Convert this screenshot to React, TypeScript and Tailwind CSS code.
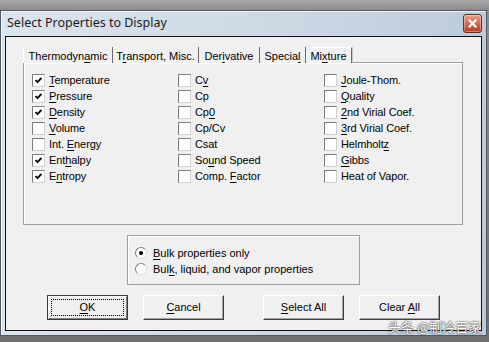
import React from "react";

const FONT = "font-['Liberation_Sans',Arial,sans-serif]";

// label with an underlined access key
function Key({ text, u }: { text: string; u?: number }) {
  if (u === undefined) return <span>{text}</span>;
  return (
    <span>
      {text.slice(0, u)}
      <span className="underline underline-offset-[2px] decoration-[1px]">{text[u]}</span>
      {text.slice(u + 1)}
    </span>
  );
}

function Check({ label, u, checked }: { label: string; u?: number; checked?: boolean }) {
  return (
    <div className="h-[16px] flex items-center gap-[4px]">
      <div className="w-[13px] h-[13px] shrink-0 bg-white border border-t-[#7d7d7d] border-l-[#7d7d7d] border-b-[#d0d0d0] border-r-[#d0d0d0] flex items-center justify-center">
        {checked && (
          <svg width="9" height="9" viewBox="0 0 9 9">
            <polyline points="1.5,4 3.5,6.2 7.5,1.8" fill="none" stroke="#000" strokeWidth="1.8" />
          </svg>
        )}
      </div>
      <span className="text-[11px] leading-none text-black tracking-[-0.1px]">
        <Key text={label} u={u} />
      </span>
    </div>
  );
}

function Radio({ label, u, on }: { label: string; u?: number; on?: boolean }) {
  return (
    <div className="h-[16px] flex items-center gap-[6px]">
      <div className="w-[12px] h-[12px] rounded-full bg-white border border-t-[#808080] border-l-[#808080] border-b-[#e0e0e0] border-r-[#e0e0e0] flex items-center justify-center">
        {on && <div className="w-[4px] h-[4px] rounded-full bg-black" />}
      </div>
      <span className="text-[11px] leading-none text-black">
        <Key text={label} u={u} />
      </span>
    </div>
  );
}

function Btn({ label, u, def, className }: { label: string; u: number; def?: boolean; className?: string }) {
  if (def) {
    return (
      <div className={`w-[81px] h-[25px] border border-[#3a3a3a] ${className ?? ""}`}>
        <div className="w-full h-full border border-t-white border-l-white border-b-[#808080] border-r-[#808080] bg-[#f0f0f0] p-[2px]">
          <div className="w-full h-full border border-dotted border-black flex items-center justify-center text-[11px] text-black">
            <Key text={label} u={u} />
          </div>
        </div>
      </div>
    );
  }
  return (
    <div
      className={`w-[81px] h-[25px] border border-t-white border-l-white border-b-[#404040] border-r-[#404040] bg-[#f0f0f0] shadow-[inset_-1px_-1px_0_#a0a0a0] flex items-center justify-center text-[11px] text-black ${className ?? ""}`}
    >
      <Key text={label} u={u} />
    </div>
  );
}

const tabs: { t: string; u: number; w: string }[] = [
  { t: "Thermodynamic", u: 9, w: "w-[90px]" },
  { t: "Transport, Misc.", u: 1, w: "w-[86px]" },
  { t: "Derivative", u: 3, w: "w-[61px]" },
  { t: "Special", u: 6, w: "w-[46px]" },
  { t: "Mixture", u: 2, w: "w-[46px]" },
];

const col1 = [
  { l: "Temperature", u: 0, c: true },
  { l: "Pressure", u: 0, c: true },
  { l: "Density", u: 0, c: true },
  { l: "Volume", u: 0 },
  { l: "Int. Energy", u: 5 },
  { l: "Enthalpy", u: 3, c: true },
  { l: "Entropy", u: 1, c: true },
];
const col2 = [
  { l: "Cv", u: 1 },
  { l: "Cp" },
  { l: "Cp0", u: 2 },
  { l: "Cp/Cv" },
  { l: "Csat" },
  { l: "Sound Speed", u: 2 },
  { l: "Comp. Factor", u: 6 },
];
const col3 = [
  { l: "Joule-Thom.", u: 0 },
  { l: "Quality", u: 0 },
  { l: "2nd Virial Coef.", u: 0 },
  { l: "3rd Virial Coef.", u: 0 },
  { l: "Helmholtz", u: 8 },
  { l: "Gibbs", u: 0 },
  { l: "Heat of Vapor." },
];

export default function App() {
  return (
    <div className={`relative w-[489px] h-[342px] overflow-hidden bg-gradient-to-b from-[#8e8e8e] to-[#6f6f6f] ${FONT}`}>
      <div className="h-[10px] bg-gradient-to-b from-[#a8a8a8] to-[#8c8c8c]" />

      {/* window */}
      <div className="w-[487px] h-[326px] border border-[#4f5a66] bg-gradient-to-r from-[#dce4ec] via-[#cfdae5] to-[#bccbdb] flex flex-col shadow-[inset_1px_1px_0_#f2f6fa]">
        {/* title bar */}
        <div className="h-[25px] flex items-start justify-between pl-[6px] pr-[4px]">
          <div className="pt-[4px] text-[12.5px] leading-[16px] text-[#1c1c1c] font-['Noto_Sans',sans-serif]">
            Select Properties to Display
          </div>
          <div className="mt-[3px] w-[19px] h-[19px] rounded-[3px] border border-[#6e2a1c] bg-gradient-to-b from-[#e9a590] via-[#d46a4e] to-[#b8381e] shadow-[inset_0_0_0_1px_rgba(255,255,255,0.35)] flex items-center justify-center">
            <svg width="9" height="9" viewBox="0 0 9 9">
              <path d="M1.5 1.5 L7.5 7.5 M7.5 1.5 L1.5 7.5" stroke="#fff" strokeWidth="2.2" strokeLinecap="square" />
            </svg>
          </div>
        </div>

        {/* client area */}
        <div className="mx-[4px] h-[295px] border border-[#111] bg-[#f0f0f0] flex flex-col">
          <div className="pt-[10px] pl-[17px]">
            {/* tab strip */}
            <div className="flex h-[16px] relative z-10 -mb-[1px]">
              {tabs.map((t, i) => (
                <div
                  key={t.t}
                  className={`${t.w} h-[16px] bg-[#f0f0f0] flex items-end justify-center pb-[1px] text-[11px] leading-none text-black border-r border-r-[#6a6a6a] ${
                    i === 0 ? "border-l border-l-white" : ""
                  } ${i === tabs.length - 1 ? "border-t border-t-white shadow-[1px_0_0_#c8c8c8]" : ""}`}
                >
                  <Key text={t.t} u={t.u} />
                </div>
              ))}
            </div>

            {/* tab pane */}
            <div className="w-[440px] h-[163px] border border-[#a0a0a0] shadow-[inset_1px_1px_0_#ffffff] pt-[9px] pl-[8px] flex">
              <div className="w-[146px]">
                {col1.map((c) => (
                  <Check key={c.l} label={c.l} u={c.u} checked={c.c} />
                ))}
              </div>
              <div className="w-[146px]">
                {col2.map((c) => (
                  <Check key={c.l} label={c.l} u={c.u} />
                ))}
              </div>
              <div className="flex-1">
                {col3.map((c) => (
                  <Check key={c.l} label={c.l} u={c.u} />
                ))}
              </div>
            </div>
          </div>

          {/* radio group */}
          <div className="mt-[10px] ml-[121px] w-[233px] h-[50px] border border-[#a0a0a0] shadow-[inset_1px_1px_0_#ffffff] pt-[9px] pl-[7px]">
            <Radio label="Bulk properties only" u={0} on />
            <Radio label="Bulk, liquid, and vapor properties" u={3} />
          </div>

          {/* buttons */}
          <div className="mt-[10px] flex">
            <Btn label="OK" u={0} def className="ml-[41px]" />
            <Btn label="Cancel" u={0} className="ml-[15px]" />
            <Btn label="Select All" u={0} className="ml-[39px]" />
            <Btn label="Clear All" u={6} className="ml-[15px]" />
          </div>
        </div>
      </div>

      {/* watermark */}
      <div className="absolute left-[388px] top-[318px] whitespace-nowrap text-[13px] leading-[18px] text-white font-['Noto_Sans_CJK_SC',sans-serif] [text-shadow:0_0_2px_#333,0_0_1px_#333]">
        头条 @制冷百家
      </div>
    </div>
  );
}
